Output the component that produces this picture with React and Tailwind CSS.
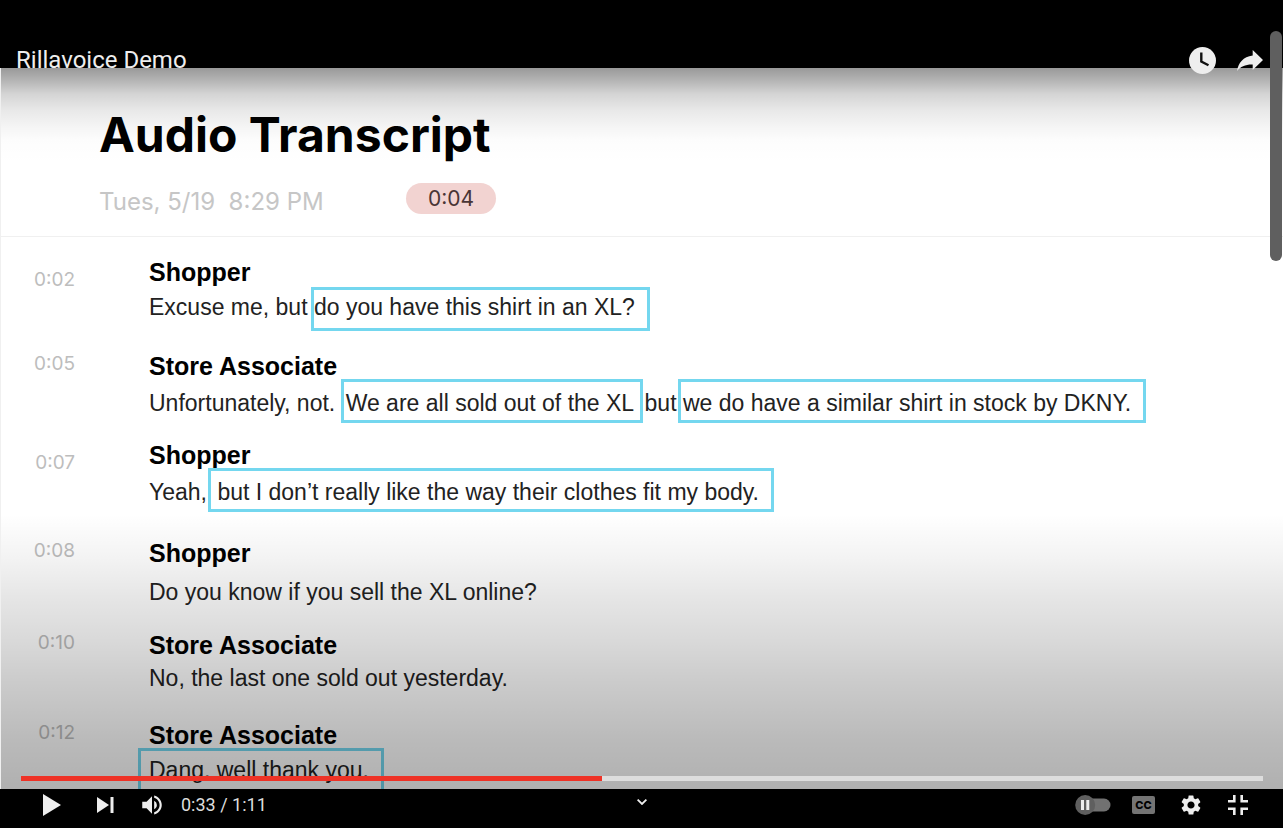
import { MdSettings, MdVolumeUp } from "react-icons/md";

const transcript = [
  {
    time: "0:02",
    speaker: "Shopper",
    timePad: "pt-3",
    gap: "mb-6",
    lead: "mt-0",
    parts: [
      { text: "Excuse me, but " },
      { text: "do you have this shirt in an XL?", box: "-ml-[3px] pt-1 pr-3 pb-2" },
    ],
  },
  {
    time: "0:05",
    speaker: "Store Associate",
    timePad: "pt-0.5",
    gap: "mb-[17px]",
    lead: "mt-0.5",
    parts: [
      { text: "Unfortunately, not. " },
      { text: "We are all sold out of the XL", box: "-mr-[5px] -ml-px pt-2 pr-1.5 pb-1 pl-0.5" },
      { text: " but " },
      { text: "we do have a similar shirt in stock by DKNY.", box: "-ml-[5px] pt-2 pr-3 pb-1 pl-0.5" },
    ],
  },
  {
    time: "0:07",
    speaker: "Shopper",
    timePad: "pt-3",
    gap: "mb-[26px]",
    lead: "mt-0.5",
    parts: [
      { text: "Yeah, " },
      { text: "but I don’t really like the way their clothes fit my body.", box: "-ml-[5px] pt-2 pr-3 pb-1 pl-1.5" },
    ],
  },
  {
    time: "0:08",
    speaker: "Shopper",
    timePad: "pt-0.5",
    gap: "mb-[18px]",
    lead: "mt-1",
    parts: [{ text: "Do you know if you sell the XL online?" }],
  },
  {
    time: "0:10",
    speaker: "Store Associate",
    timePad: "pt-0.5",
    gap: "mb-[22px]",
    lead: "-mt-0.5",
    parts: [{ text: "No, the last one sold out yesterday." }],
  },
  {
    time: "0:12",
    speaker: "Store Associate",
    timePad: "pt-0.5",
    gap: "mb-0",
    lead: "mt-0",
    parts: [{ text: "Dang, well thank you.", box: "-ml-[11px] py-1.5 pr-3 pl-2" }],
  },
];

function Entry({ entry }) {
  return (
    <li className={`grid grid-cols-[74px_1fr] gap-x-[74px] ${entry.gap}`}>
      <time className={`text-right font-[Inter,sans-serif] text-[19px] leading-6 text-[#bdbdbd] ${entry.timePad}`}>
        {entry.time}
      </time>
      <div className="font-['Liberation_Sans',sans-serif]">
        <h2 className="text-[25px] leading-8 font-bold text-black">{entry.speaker}</h2>
        <p className={`text-[23px] leading-[38px] text-[#222222] ${entry.lead}`}>
          {entry.parts.map((part) =>
            part.box ? (
              <mark key={part.text} className={`border-3 border-[#74d7ef] bg-transparent text-inherit ${part.box}`}>
                {part.text}
              </mark>
            ) : (
              <span key={part.text}>{part.text}</span>
            )
          )}
        </p>
      </div>
    </li>
  );
}

function TopBar() {
  return (
    <header className="relative z-10 flex h-19 items-center justify-between pt-11 pr-5 pl-4">
      <h1 className="text-2xl leading-8 text-[#eeeeee]">Rillavoice Demo</h1>
      <div className="flex items-center gap-[21px]">
        <button aria-label="Watch later">
          <svg width="27" height="27" viewBox="0 0 27 27">
            <circle cx="13.5" cy="13.5" r="13.5" fill="#eeeeee" />
            <path d="M12.3 5.5V14.6L19.5 18.3" fill="none" stroke="#111111" strokeWidth="2.4" />
          </svg>
        </button>
        <button aria-label="Share">
          <svg width="26" height="21" viewBox="0 0 26 21" fill="#eeeeee">
            <path d="M15.7 0L26 10L15.7 20V14.4C8.5 14.2 3.6 16.4 0 21C1.5 13 6 6.8 15.7 5.6Z" />
          </svg>
        </button>
      </div>
    </header>
  );
}

function Slide() {
  return (
    <main className="relative -mt-2 flex-1 overflow-hidden border-l border-[#f0f0f0] bg-white">
      <section className="border-b border-[#f0f0f0] pt-[39px] pb-[22px] pl-[98px] font-[Inter,sans-serif]">
        <h2 className="text-5xl leading-[56px] font-bold text-black">Audio Transcript</h2>
        <div className="mt-5 flex items-center">
          <p className="w-[307px] pt-1.5 text-2xl leading-[25px] whitespace-pre text-[#c6c6c6]">
            {"Tues, 5/19  8:29 PM"}
          </p>
          <span className="w-[90px] rounded-full bg-[#f2d3d1] text-center text-[21px] leading-[31px] text-[#4a3535]">
            0:04
          </span>
        </div>
      </section>
      <ol className="pt-[19px]">
        {transcript.map((entry) => (
          <Entry key={entry.time} entry={entry} />
        ))}
      </ol>
      <div className="pointer-events-none absolute inset-x-0 top-0 h-24 bg-[linear-gradient(to_bottom,rgba(0,0,0,0.4),rgba(0,0,0,0.3)_12%,rgba(0,0,0,0.17)_27%,rgba(0,0,0,0.09)_44%,rgba(0,0,0,0.04)_62%,rgba(0,0,0,0.01)_75%,transparent)]" />
      <div className="pointer-events-none absolute inset-x-0 bottom-0 h-[275px] bg-[linear-gradient(to_top,rgba(0,0,0,0.31),rgba(0,0,0,0.27)_18%,rgba(0,0,0,0.2)_40%,rgba(0,0,0,0.15)_54%,rgba(0,0,0,0.1)_69%,rgba(0,0,0,0.05)_83%,transparent)]" />
      <input
        type="range"
        aria-label="Seek"
        min="0"
        max="71"
        defaultValue="33"
        className="absolute inset-x-5 bottom-2 h-[5px] appearance-none bg-[linear-gradient(to_right,#ee3226_46.8%,#dddddd_46.8%)] [&::-webkit-slider-thumb]:h-0 [&::-webkit-slider-thumb]:w-0 [&::-webkit-slider-thumb]:appearance-none"
      />
    </main>
  );
}

function Controls() {
  return (
    <footer className="grid h-[39px] grid-cols-[1fr_auto_1fr] items-center px-[35px] pb-[7px] text-[#eeeeee]">
      <div className="flex items-center pl-2">
        <button aria-label="Play">
          <svg width="18" height="22" viewBox="0 0 18 22" fill="currentColor">
            <path d="M0 0L18 11L0 22Z" />
          </svg>
        </button>
        <button aria-label="Next" className="ml-9">
          <svg width="17" height="16" viewBox="0 0 17 16" fill="currentColor">
            <path d="M0 0L12 8L0 16ZM13.5 0H16.5V16H13.5Z" />
          </svg>
        </button>
        <button aria-label="Mute" className="ml-[25px]">
          <MdVolumeUp size={26} />
        </button>
        <span className="ml-4 text-lg leading-6 text-[#dddddd]">0:33 / 1:11</span>
      </div>
      <button aria-label="More" className="pb-1.5">
        <svg width="10" height="6" viewBox="0 0 10 6" fill="none" stroke="currentColor" strokeWidth="1.8">
          <path d="M0.6 0.6L5 5L9.4 0.6" />
        </svg>
      </button>
      <div className="flex items-center justify-end">
        <button role="switch" aria-checked="false" aria-label="Autoplay">
          <svg width="36" height="20" viewBox="0 0 36 20">
            <rect x="8" y="3.5" width="27.5" height="13" rx="6.5" fill="#717171" />
            <circle cx="10.2" cy="10" r="10" fill="#5f5f5f" />
            <path d="M6 5H9V15H6ZM11.3 5H14.3V15H11.3Z" fill="#eeeeee" />
          </svg>
        </button>
        <button
          aria-label="Subtitles"
          className="ml-[21px] h-[18px] w-[23px] rounded-xs bg-[#747474] text-center font-[Inter,sans-serif] text-[11px] leading-[18px] font-extrabold text-black"
        >
          CC
        </button>
        <button aria-label="Settings" className="ml-6">
          <MdSettings size={24} />
        </button>
        <button aria-label="Exit full screen" className="ml-[25px]">
          <svg width="20" height="20" viewBox="0 0 20 20" fill="currentColor">
            <path d="M0 5H5V0H7.6V7.6H0ZM20 5H15V0H12.4V7.6H20ZM0 15H5V20H7.6V12.4H0ZM20 15H15V20H12.4V12.4H20Z" />
          </svg>
        </button>
      </div>
    </footer>
  );
}

export default function App() {
  return (
    <div className="relative flex min-h-screen flex-col bg-black font-[Roboto,sans-serif] [&_svg]:block">
      <TopBar />
      <Slide />
      <Controls />
      <div className="absolute top-[31px] right-px z-20 h-[230px] w-3 rounded-full bg-[#5f5f5f]" />
    </div>
  );
}
